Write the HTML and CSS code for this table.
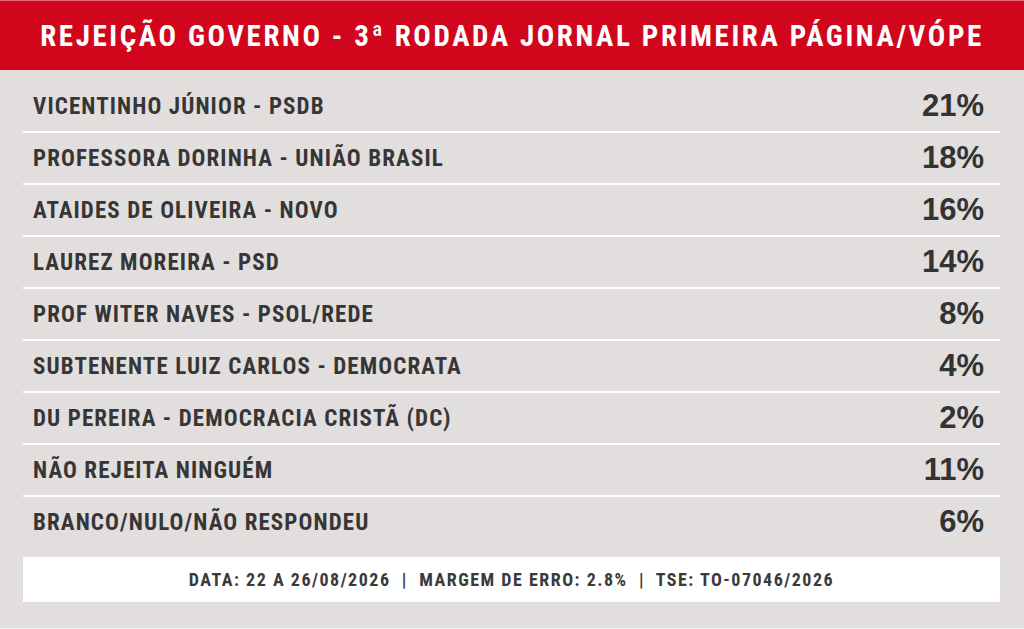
FILE: index.html
```html
<!DOCTYPE html>
<html lang="pt-BR">
<head>
<meta charset="utf-8">
<title>Rejeição Governo</title>
<link rel="stylesheet" href="styles.css">
</head>
<body>
<div class="page">
  <header class="header">
    <h1 class="title">REJEIÇÃO GOVERNO - 3ª RODADA JORNAL PRIMEIRA PÁGINA/VÓPE</h1>
  </header>
  <main class="panel">
    <ul class="rows">
      <li class="row"><span class="label">VICENTINHO JÚNIOR - PSDB</span><span class="value">21%</span></li>
      <li class="row"><span class="label">PROFESSORA DORINHA - UNIÃO BRASIL</span><span class="value">18%</span></li>
      <li class="row"><span class="label">ATAIDES DE OLIVEIRA - NOVO</span><span class="value">16%</span></li>
      <li class="row"><span class="label">LAUREZ MOREIRA - PSD</span><span class="value">14%</span></li>
      <li class="row"><span class="label">PROF WITER NAVES - PSOL/REDE</span><span class="value">8%</span></li>
      <li class="row"><span class="label">SUBTENENTE LUIZ CARLOS - DEMOCRATA</span><span class="value">4%</span></li>
      <li class="row"><span class="label">DU PEREIRA - DEMOCRACIA CRISTÃ (DC)</span><span class="value">2%</span></li>
      <li class="row"><span class="label">NÃO REJEITA NINGUÉM</span><span class="value">11%</span></li>
      <li class="row"><span class="label">BRANCO/NULO/NÃO RESPONDEU</span><span class="value">6%</span></li>
    </ul>
    <footer class="footer">DATA: 22 A 26/08/2026 &nbsp;|&nbsp; MARGEM DE ERRO: 2.8% &nbsp;|&nbsp; TSE: TO-07046/2026</footer>
  </main>
</div>
</body>
</html>
```
FILE: styles.css
```css
* { box-sizing: border-box; }
html, body { margin: 0; padding: 0; }
body {
  width: 1024px;
  height: 629px;
  overflow: hidden;
  background: #e1dedd;
  font-family: "Roboto Condensed", "Liberation Sans Narrow", "DejaVu Sans Condensed", Roboto, sans-serif;
  font-stretch: condensed;
}
.page {
  display: flex;
  flex-direction: column;
  height: 629px;
  border-bottom: 1px solid #f2f0ef;
}
.header {
  height: 70px;
  background: #d1061d;
  border-top: 1px solid #e66a78;
  display: flex;
  align-items: center;
  justify-content: center;
}
.title {
  margin: 0;
  color: #ffffff;
  font-size: 29px;
  font-weight: 700;
  letter-spacing: 2.6px;
  white-space: nowrap;
}
.panel {
  padding: 11px 24px 0 23px;
}
.rows {
  list-style: none;
  margin: 0;
  padding: 0;
}
.row {
  height: 52px;
  display: flex;
  align-items: center;
  justify-content: space-between;
  padding: 0 16px 0 10px;
  border-bottom: 2px solid #ffffff;
}
.row:last-child {
  border-bottom: none;
  height: 50px;
}
.label {
  color: #363636;
  font-size: 23px;
  font-weight: 700;
  letter-spacing: 1.1px;
  white-space: nowrap;
}
.value {
  color: #333333;
  font-family: "Liberation Sans", Arial, sans-serif;
  font-stretch: normal;
  font-size: 31px;
  font-weight: 700;
}
.footer {
  margin-top: 10px;
  height: 45px;
  background: #ffffff;
  display: flex;
  align-items: center;
  justify-content: center;
  color: #3a3a3a;
  font-size: 18px;
  font-weight: 700;
  letter-spacing: 1.5px;
  white-space: nowrap;
}
```
